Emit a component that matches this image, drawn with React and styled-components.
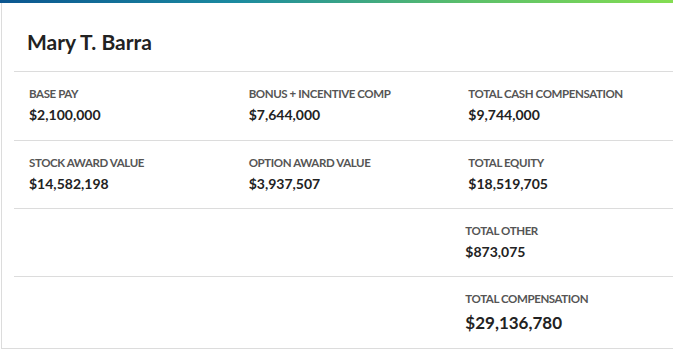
import React from 'react';
import styled, { createGlobalStyle } from 'styled-components';

const GlobalStyle = createGlobalStyle`
    html, body {
        margin: 0;
        padding: 0;
        background: #fff;
    }
    body {
        font-family: Lato, "Open Sans", sans-serif;
        color: #222;
    }
`;

const Card = styled.section`
    width: 672px;
    height: 349px;
    box-sizing: border-box;
    border-left: 1px solid #dcdcdc;
    border-bottom: 1px solid #dcdcdc;
    margin-left: 1px;
    background: #fff;

    &::before {
        content: '';
        display: block;
        height: 3px;
        margin-left: -2px;
        background: linear-gradient(90deg, #0b5690 0%, #1b8aa0 35%, #5cc06a 70%, #84dd52 100%);
    }
`;

const Title = styled.h2`
    margin: 0;
    padding: 26px 0 0 25px;
    height: 42px;
    font-size: 21px;
    font-weight: 700;
    line-height: 26px;
    color: #222;
`;

const Table = styled.div`
    margin-left: 12px;
`;

const Row = styled.div`
    display: grid;
    grid-template-columns: repeat(3, 1fr);
    height: ${(p) => p.$height}px;
    border-top: 1px solid #dcdcdc;
    box-sizing: border-box;
`;

const Cell = styled.div`
    padding: 15px 0 0 ${(p) => p.$indent ?? 15}px;
`;

const Label = styled.div`
    font-size: 11.5px;
    font-weight: 700;
    line-height: 13px;
    letter-spacing: -0.4px;
    color: #555;
    text-transform: uppercase;
`;

const Value = styled.div`
    margin-top: ${(p) => (p.$big ? 7 : 6)}px;
    font-size: ${(p) => (p.$big ? 17 : 14)}px;
    font-weight: 700;
    line-height: ${(p) => (p.$big ? 21 : 18)}px;
    color: #222;
`;

const rows = [
    {
        height: 69,
        cells: [
            ['Base Pay', '$2,100,000'],
            ['Bonus + Incentive Comp', '$7,644,000'],
            ['Total Cash Compensation', '$9,744,000'],
        ],
    },
    {
        height: 68,
        cells: [
            ['Stock Award Value', '$14,582,198'],
            ['Option Award Value', '$3,937,507'],
            ['Total Equity', '$18,519,705'],
        ],
    },
    {
        height: 68,
        cells: [null, null, ['Total Other', '$873,075']],
        indent: 12,
    },
    {
        height: 71,
        cells: [null, null, ['Total Compensation', '$29,136,780']],
        indent: 12,
        big: true,
    },
];

const App = () => {
    return (
        <>
            <GlobalStyle />
            <Card>
                <Title>Mary T. Barra</Title>
                <Table>
                    {rows.map((row, i) => (
                        <Row key={i} $height={row.height}>
                            {row.cells.map((cell, j) => (
                                <Cell key={j} $indent={cell && row.indent}>
                                    {cell && (
                                        <>
                                            <Label>{cell[0]}</Label>
                                            <Value $big={row.big}>{cell[1]}</Value>
                                        </>
                                    )}
                                </Cell>
                            ))}
                        </Row>
                    ))}
                </Table>
            </Card>
        </>
    );
};

export default App;
